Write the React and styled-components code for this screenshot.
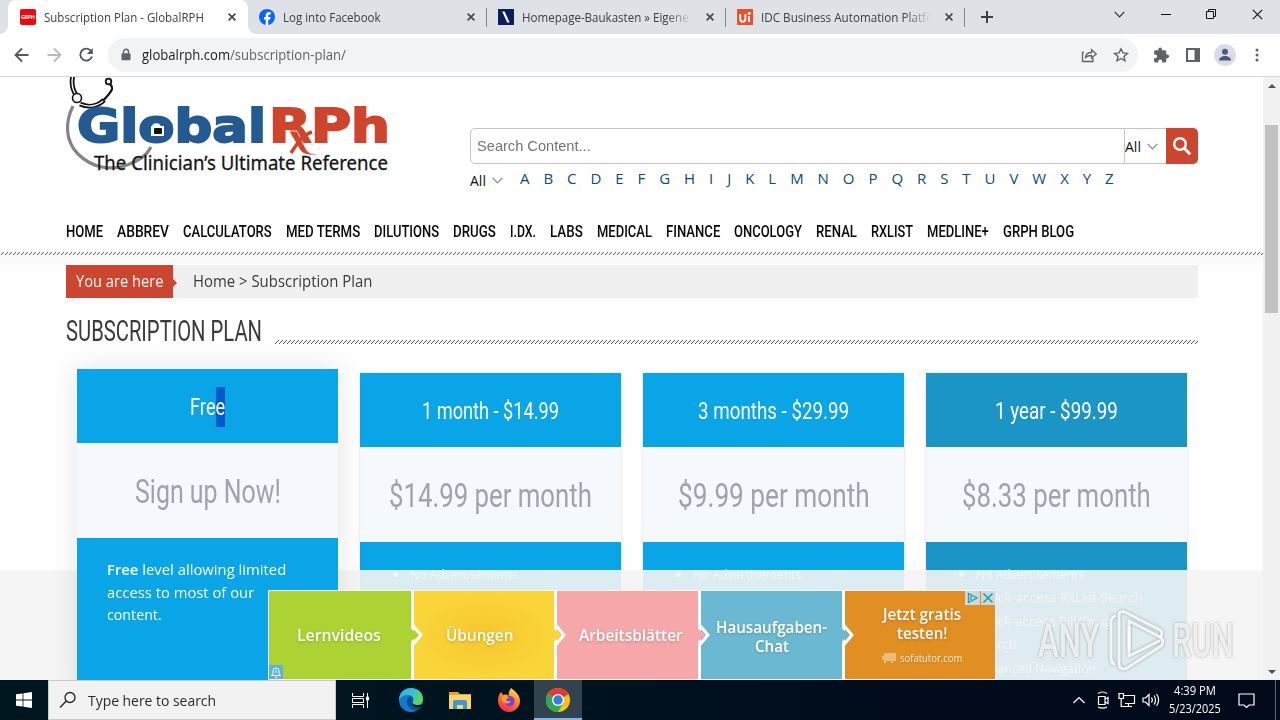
import React, { Fragment, useLayoutEffect, useRef, useState } from 'react';
import styled, { createGlobalStyle, css } from 'styled-components';

const SANS = '"Open Sans", "Noto Sans", sans-serif';
const NARROW = 'Roboto, "Open Sans", sans-serif';

const GlobalStyle = createGlobalStyle`
  * {
    box-sizing: border-box;
  }
  body {
    margin: 0;
    overflow: hidden;
    font-family: ${SANS};
  }
  ul {
    margin: 0;
    padding: 0;
    list-style: none;
  }
`;

const FitBox = styled.span`
  display: inline-block;
  flex: none;
  white-space: nowrap;
`;

const FitInner = styled.span`
  display: inline-block;
  transform-origin: 0 50%;
`;

// stretches or squeezes one line of text to a given width
function Fit({ w, children }) {
  const ref = useRef(null);
  const [scale, setScale] = useState(1);
  useLayoutEffect(() => {
    setScale(w / ref.current.offsetWidth);
  }, [w]);
  return (
    <FitBox style={{ width: w }}>
      <FitInner ref={ref} style={{ transform: `scaleX(${scale})` }}>{children}</FitInner>
    </FitBox>
  );
}

const Screen = styled.div`
  display: flex;
  flex-direction: column;
  width: 1280px;
  height: 720px;
  overflow: hidden;
  background: #fff;
`;

/* ---------- browser ---------- */

const TabStrip = styled.div`
  display: flex;
  flex: none;
  height: 34px;
  padding-left: 8px;
  background: #dee1e6;
`;

const Tab = styled.div`
  position: relative;
  display: flex;
  align-items: center;
  width: ${props => (props.$active ? 240 : 239)}px;
  height: 34px;
  padding: 0 12px 0 ${props => (props.$active ? 12 : 11)}px;
  color: #3c4043;
  font-size: 12px;
  ${props => props.$active && css`
    background: #fff;
    border-radius: 8px 8px 0 0;
    &::before, &::after {
      content: '';
      position: absolute;
      bottom: 0;
      width: 8px;
      height: 8px;
    }
    &::before {
      left: -8px;
      background: radial-gradient(circle at 0 0, transparent 7.5px, #fff 8px);
    }
    &::after {
      right: -8px;
      background: radial-gradient(circle at 100% 0, transparent 7.5px, #fff 8px);
    }
  `}
  ${props => !props.$active && css`
    &::after {
      content: '';
      position: absolute;
      right: 0;
      top: 8px;
      width: 1px;
      height: 19px;
      background: #80868b;
    }
  `}
`;

const TabTitle = styled.div`
  flex: 1;
  margin: 0 14px 0 8px;
  overflow: hidden;
  ${props => props.$fade && css`
    mask-image: linear-gradient(90deg, #000 calc(100% - 26px), transparent 100%);
  `}
`;

const WindowButtons = styled.div`
  display: flex;
  align-items: center;
  justify-content: space-between;
  width: 149px;
  height: 28px;
  margin-left: auto;
  margin-right: 17px;
`;

const NewTab = styled.div`
  display: flex;
  align-items: center;
  padding-left: 16px;
`;

const Toolbar = styled.div`
  display: flex;
  flex: none;
  align-items: center;
  height: 43px;
  padding: 0 12px 1px 12px;
  border-bottom: 1px solid #d5d7d9;
  svg {
    flex: none;
  }
`;

const NavButtons = styled.div`
  display: flex;
  gap: 12px;
  margin-right: 12px;
`;

const Omnibox = styled.div`
  display: flex;
  align-items: center;
  width: 1032px;
  height: 34px;
  padding: 0 8px 0 8px;
  border-radius: 17px;
  background: #f1f3f4;
  color: #5f6368;
  font-size: 14px;
  b {
    color: #202124;
    font-weight: 400;
  }
`;

const Url = styled.div`
  flex: 1;
  margin-left: 6px;
`;

const OmniActions = styled.div`
  display: flex;
  gap: 12px;
  margin-right: -1px;
`;

const ToolActions = styled.div`
  display: flex;
  align-items: center;
  gap: 10px;
  margin-left: 12px;
`;

const Viewport = styled.div`
  position: relative;
  display: flex;
  flex: none;
  height: 603px;
  overflow: hidden;
`;

const Page = styled.main`
  position: relative;
  width: 1263px;
  height: 603px;
  overflow: hidden;
`;

const Scrollbar = styled.div`
  display: flex;
  flex-direction: column;
  align-items: center;
  justify-content: space-between;
  width: 17px;
  padding: 7px 0 6px;
  background: #f1f1f1;
`;

const Thumb = styled.div`
  width: 13px;
  height: 188px;
  margin: 0 0 320px;
  background: #c1c1c1;
`;

/* ---------- site ---------- */

const Header = styled.header`
  display: flex;
  height: 134px;
  padding-left: 62px;
`;

const SearchArea = styled.div`
  width: 728px;
  margin: 51px 0 0 68px;
`;

const SearchBar = styled.div`
  display: flex;
  height: 36px;
`;

const SearchInput = styled.div`
  width: 655px;
  height: 36px;
  padding-left: 6px;
  border: 1px solid #c4c4c4;
  border-radius: 5px 0 0 5px;
  color: #757575;
  font-family: "Liberation Sans", Arial, sans-serif;
  font-size: 15px;
  line-height: 34px;
`;

const Select = styled.div`
  display: flex;
  align-items: center;
  gap: 6px;
  color: #111;
  font-size: 14px;
  ${props => props.$boxed && css`
    width: 41px;
    border-top: 1px solid #c4c4c4;
    border-bottom: 1px solid #c4c4c4;
  `}
  ${props => !props.$boxed && css`
    padding-top: 3px;
  `}
`;

const SearchButton = styled.div`
  display: flex;
  align-items: center;
  justify-content: center;
  width: 32px;
  border-radius: 0 5px 5px 0;
  background: #cb452f;
`;

const AlphabetRow = styled.div`
  display: flex;
  align-items: center;
  height: 30px;
`;

const Alphabet = styled.div`
  display: flex;
  justify-content: space-between;
  width: 594px;
  height: 26px;
  margin-left: 17px;
  color: #0d4a84;
  font-size: 15px;
  line-height: 24px;
`;

const Menu = styled.nav`
  display: flex;
  gap: 14px;
  height: 41px;
  padding: 8px 0 0 66px;
  color: #080808;
  font-family: ${NARROW};
  font-size: 17px;
  font-weight: 500;
  line-height: 25px;
`;

const Hatch = styled.div`
  flex: 1;
  height: ${props => props.$rows}px;
  background:
    linear-gradient(90deg, #555 1px, transparent 1px) 3px 0 / 4px 1px repeat-x,
    linear-gradient(90deg, #555 1px, transparent 1px) 2px 1px / 4px 1px repeat-x,
    linear-gradient(90deg, #555 1px, transparent 1px) 1px 2px / 4px 1px repeat-x
    ${props => props.$rows > 3 && css`,
    linear-gradient(90deg, #555 1px, transparent 1px) 0 3px / 4px 1px repeat-x`};
`;

const MenuLine = styled.div`
  display: flex;
`;

const Content = styled.section`
  width: 1263px;
  padding: 10px 65px 0 66px;
  background: linear-gradient(#f9f9f9, #fefefe 14px);
`;

const Breadcrumb = styled.div`
  display: flex;
  height: 33px;
  background: #f0f0f0;
  color: #3a3a3a;
  font-size: 15.5px;
  line-height: 33px;
`;

const YouAreHere = styled.div`
  position: relative;
  width: 107px;
  margin-right: 20px;
  padding-left: 10px;
  background: #cb452f;
  color: #fff;
  &::after {
    content: '';
    position: absolute;
    left: 107px;
    top: 14px;
    border: 4px solid transparent;
    border-left-color: #cb452f;
    border-right: 0;
  }
`;

const TitleRow = styled.div`
  display: flex;
  align-items: flex-end;
  gap: 13px;
  height: 46px;
`;

const Title = styled.h1`
  height: 38px;
  margin: 0;
  color: #3a3a3a;
  font-family: ${NARROW};
  font-size: 29px;
  font-weight: 400;
  line-height: 50px;
`;

const Plans = styled.div`
  display: flex;
  gap: 22px;
  padding: 29px 11px 0;
`;

const Plan = styled.article`
  position: relative;
  width: 261px;
  height: 330px;
  background: ${props => props.$color};
  box-shadow: 0 0 3px rgba(0, 0, 0, 0.15);
  text-align: center;
  ${props => props.$raised && css`
    z-index: 2;
    margin-top: -4px;
    box-shadow: 0 0 26px rgba(0, 0, 0, 0.1);
  `}
`;

const PlanName = styled.h2`
  height: 74px;
  margin: 0;
  color: #fff;
  font-family: ${NARROW};
  font-size: 24px;
  font-weight: 400;
  line-height: 77px;
`;

const Selected = styled.span`
  padding: 6px 0;
  background: #0158ce;
`;

const Price = styled.div`
  height: 95px;
  background: #f5f8fc;
  color: #9fa4ac;
  font-family: ${NARROW};
  font-size: 34px;
  line-height: 97px;
`;

const PlanText = styled.p`
  display: flex;
  flex-direction: column;
  margin: 0;
  padding: 20px 30px;
  color: #fff;
  font-size: 15px;
  line-height: 22.5px;
  text-align: left;
  b {
    font-weight: 600;
  }
`;

const Features = styled.ul`
  padding: 21px 0 0 50px;
  color: #fff;
  font-size: 13.5px;
  line-height: 23.4px;
  text-align: left;
  li {
    position: relative;
  }
  li::before {
    content: '';
    position: absolute;
    left: -17px;
    top: 9px;
    width: 5px;
    height: 5px;
    border-radius: 50%;
    background: #fff;
  }
`;

/* ---------- banner over the page ---------- */

const Haze = styled.div`
  position: absolute;
  left: 0;
  right: 0;
  bottom: 0;
  height: 110px;
  background: rgba(244, 244, 244, 0.9);
`;

const Banner = styled.div`
  position: absolute;
  z-index: 3;
  left: 268px;
  bottom: 0;
  display: flex;
  gap: 3px;
  width: 727px;
  height: 90px;
  border: 1px solid #f5f6ee;
  border-right: 0;
  background: #fff;
`;

const Panel = styled.div`
  position: relative;
  display: flex;
  flex-direction: column;
  align-items: center;
  justify-content: center;
  width: ${props => props.$w}px;
  padding: ${props => props.$pad || 0};
  background: ${props => props.$bg};
  color: #fff;
  font-size: 16px;
  font-weight: 600;
  line-height: 19px;
  text-shadow: 0 1px 3px rgba(0, 0, 0, 0.2);
  small {
    display: flex;
    align-items: center;
    gap: 3px;
    margin-top: 5px;
    font-size: 11px;
    font-weight: 400;
    opacity: 0.85;
  }
`;

const Chevron = styled.svg`
  position: absolute;
  z-index: 1;
  right: -13px;
  top: 31px;
`;

const AdChoices = styled.div`
  position: absolute;
  right: 0;
  top: 0;
  display: flex;
  gap: 1px;
  svg {
    background: #cfd8d8;
  }
`;

const AdBell = styled.svg`
  position: absolute;
  left: 0;
  bottom: 0;
`;

const Watermark = styled.div`
  position: absolute;
  z-index: 4;
  left: 1038px;
  top: 532px;
  display: flex;
  align-items: center;
  color: rgba(255, 255, 255, 0.8);
  font-family: ${NARROW};
  font-size: 48px;
  font-weight: 500;
  line-height: 64px;
  text-shadow: 0 0 3px rgba(90, 90, 90, 0.55);
  svg {
    margin: 0 5px 0 7px;
    filter: drop-shadow(0 0 1.5px rgba(90, 90, 90, 0.6));
  }
`;

/* ---------- taskbar ---------- */

const Taskbar = styled.footer`
  display: flex;
  flex: none;
  height: 40px;
  background: linear-gradient(90deg, #00161f 0%, #00141f 40%, #010b1c 70%, #020a1b 100%);
  color: #fff;
`;

const Start = styled.div`
  display: flex;
  align-items: center;
  justify-content: center;
  width: 48px;
`;

const TaskSearch = styled.div`
  display: flex;
  align-items: center;
  gap: 11px;
  width: 288px;
  padding-left: 10px;
  border: 1px solid #c9c9c9;
  background: #f2f2f2;
  color: #2b2b2b;
  font-size: 15px;
`;

const TaskButton = styled.div`
  display: flex;
  align-items: center;
  justify-content: center;
  width: ${props => props.$w || 49}px;
  ${props => props.$active && css`
    background: #33434e;
    border-bottom: 2px solid #76b9ed;
    padding-top: 2px;
  `}
`;

const Tray = styled.div`
  display: flex;
  align-items: center;
  gap: 6px;
  margin-left: auto;
`;

const Clock = styled.div`
  display: flex;
  flex-direction: column;
  align-items: center;
  width: 56px;
  margin-left: 1px;
  font-size: 12px;
  line-height: 18px;
`;

const ShowDesktop = styled.div`
  width: 5px;
  height: 40px;
  margin-left: 6px;
  border-left: 1px solid #5a626c;
`;

/* ---------- drawings ---------- */

const Cross = ({ size = 8, color = '#45494d', sw = 1.7 }) => (
  <svg width={size} height={size} viewBox="0 0 8 8" fill="none" stroke={color} strokeWidth={sw}>
    <path d="M.6.6l6.8 6.8M7.4.6L.6 7.4" />
  </svg>
);

const GrphIcon = () => (
  <svg width="16" height="16">
    <rect width="16" height="16" rx="2" fill="#f5060a" />
    <text x="1" y="10" fontSize="5.5" fontWeight="700" fill="#fff" textLength="14" fontFamily="Open Sans">GRPH</text>
  </svg>
);

const FacebookIcon = () => (
  <svg width="16" height="16" viewBox="0 0 16 16">
    <circle cx="8" cy="8" r="8" fill="#0866ff" />
    <path d="M6.7 15.8v-5.3H5V8h1.7V6.9c0-2.6 1.2-3.8 3.7-3.8.5 0 1 .1 1.3.2v2.2h-.9c-1.2 0-1.6.5-1.6 1.6V8h2.3l-.4 2.5H9.2v5.4c-.8.1-1.7.1-2.5-.1z" fill="#fff" />
  </svg>
);

const SlashIcon = () => (
  <svg width="16" height="16">
    <rect width="16" height="16" fill="#0b1f5e" />
    <path d="M4.2 2.5h2.4l5 11H9.2z" fill="#fff" />
  </svg>
);

const UiIcon = () => (
  <svg width="16" height="16">
    <rect width="16" height="16" fill="#f04e23" />
    <path d="M3.2 5v5c0 3.500 5.200 3.500 5.200 0V5M12 7.300V13" fill="none" stroke="#fff" strokeWidth="2" />
    <circle cx="12.2" cy="4.2" r="1.5" fill="#fff" />
  </svg>
);

const Down = ({ w = 11, color = '#888' }) => (
  <svg width={w} height="7" viewBox="0 0 11 7" fill="none" stroke={color} strokeWidth="1.2">
    <path d="M.7.8l4.8 5 4.8-5" />
  </svg>
);

const Logo = () => (
  <svg width="340" height="110" viewBox="62 77 340 110">
    <path d="M73 106c-8 16-8 35 5 48 14 14 33 17 49 11 12-4 20-10 24-18" fill="none" stroke="#858585" strokeWidth="3.2" />
    <g fill="none" stroke="#111">
      <path d="M73 75c-2 8-1 14 3 20M80 104c9 4 18 2 24-4" strokeWidth="4.8" />
      <path d="M73 75c-2 8-1 14 3 20M80 104c9 4 18 2 24-4" stroke="#fff" strokeWidth="1.3" />
      <path d="M103 101c3-4 8-8 9-12 .5-3-1-4-2-5" strokeWidth="2.2" />
      <circle cx="77" cy="98" r="4.5" fill="#fff" strokeWidth="1.6" />
      <circle cx="108.500" cy="81.500" r="2.8" fill="#fff" strokeWidth="1.8" />
    </g>
    <g fontFamily="DejaVu Sans" fontWeight="700" fontSize="46" strokeWidth="2">
      <text x="77" y="141.500" fill="#235a94" stroke="#235a94" textLength="189" lengthAdjust="spacingAndGlyphs">Global</text>
      <text x="269" y="141.500" fill="#cf452b" stroke="#cf452b" textLength="121" lengthAdjust="spacingAndGlyphs">RPh</text>
    </g>
    <rect x="151" y="126" width="13" height="10" fill="#fff" />
    <rect x="154" y="128" width="8" height="6" rx="1" fill="#111" />
    <path d="M289 131h8l9 18c2 4 5 5 15 5-10 2-18 1-21-4z" fill="#cf452b" stroke="#fff" strokeWidth=".8" />
    <path d="M312 132c-10 3-15 12-21 21" fill="none" stroke="#cf452b" strokeWidth="3.5" />
    <text x="94" y="169.500" fontFamily="Noto Sans" fontSize="19.5" fill="#151515" stroke="#151515" strokeWidth=".3" textLength="294" lengthAdjust="spacingAndGlyphs">The Clinician’s Ultimate Reference</text>
  </svg>
);

const BackIcon = ({ color = '#55595e', flip }) => (
  <svg width="20" height="20" viewBox="0 0 20 20" fill="none" stroke={color} strokeWidth="1.8">
    <path d={flip ? 'M3.500 10h13M10 3.500l6.500 6.500L10 16.500' : 'M16.500 10h-13M10 3.500L3.500 10l6.500 6.500'} />
  </svg>
);

const ReloadIcon = () => (
  <svg width="20" height="20" viewBox="0 0 20 20" fill="none">
    <path d="M15.300 6.300A6 6 0 1 0 16 11.500" stroke="#55595e" strokeWidth="1.9" />
    <path d="M16.800 3v6h-6z" fill="#55595e" />
  </svg>
);

const LockIcon = () => (
  <svg width="20" height="20" viewBox="0 0 20 20">
    <rect x="5.5" y="8.3" width="9" height="7" rx="1" fill="#5f6368" />
    <path d="M7.500 8.500V6.700a2.500 2.500 0 0 1 5 0v1.800" fill="none" stroke="#5f6368" strokeWidth="1.4" />
  </svg>
);

const ShareIcon = () => (
  <svg width="20" height="20" viewBox="0 0 20 20" fill="none" stroke="#5f6368" strokeWidth="1.3">
    <path d="M5 7.500H3.500v9H14V13" />
    <path d="M6.500 12.500c.3-3.700 2.500-5 6-5V4.800L17.200 9l-4.700 4v-2.500c-2.700 0-4.500.5-6 2z" />
  </svg>
);

const StarIcon = () => (
  <svg width="20" height="20" viewBox="0 0 20 20" fill="none" stroke="#5f6368" strokeWidth="1.4">
    <path d="M10 3.800l1.900 4.100 4.500.5-3.400 3 1 4.500-4-2.400-4 2.400 1-4.500-3.400-3 4.500-.5z" />
  </svg>
);

const PuzzleIcon = () => (
  <svg width="22" height="20" viewBox="0 0 24 24" fill="#5f6368">
    <path d="M20.500 11H19V7c0-1.100-.9-2-2-2h-4V3.500a2.500 2.500 0 0 0-5 0V5H4c-1.100 0-2 .9-2 2v3.800h1.500a2.700 2.700 0 0 1 0 5.400H2V20c0 1.100.9 2 2 2h3.800v-1.500a2.700 2.700 0 0 1 5.400 0V22H17c1.100 0 2-.9 2-2v-4h1.500a2.500 2.500 0 0 0 0-5z" transform="translate(2 2) scale(.86)" />
  </svg>
);

const PanelIcon = () => (
  <svg width="22" height="20" viewBox="0 0 22 20">
    <path d="M4 3h14v14H4zM6 5v10h6.500V5z" fill="#5f6368" fillRule="evenodd" />
  </svg>
);

const Avatar = () => (
  <svg width="22" height="22" viewBox="0 0 22 22">
    <circle cx="11" cy="11" r="11" fill="#dadce8" />
    <circle cx="11" cy="7.8" r="3" fill="#50587a" />
    <path d="M5 16.500c0-6 12-6 12 0z" fill="#50587a" />
  </svg>
);

const DotsIcon = () => (
  <svg width="22" height="20" viewBox="0 0 22 20" fill="#5f6368">
    <circle cx="11" cy="5" r="1.5" />
    <circle cx="11" cy="10" r="1.5" />
    <circle cx="11" cy="15" r="1.5" />
  </svg>
);

const ArrowRight = ({ color }) => (
  <Chevron width="14" height="26" viewBox="0 0 14 26">
    <path d="M0 6l9.500 7L0 20z" fill={color} />
    <path d="M3 3.500l8 9.500-8 9.500" fill="none" stroke="#fff" strokeWidth="3" />
  </Chevron>
);

const PlayMark = () => (
  <svg width="60" height="64" viewBox="0 0 60 64" fill="none" stroke="rgba(255,255,255,.85)" strokeWidth="3" strokeLinecap="round" strokeLinejoin="round">
    <path d="M8 7q-4 2-4 6v36q0 4 3 6" />
    <path d="M22 40V12l31 16q4-4 0-7L18 3q-6-2-6 4v46" />
    <path d="M22 19v28l30-15" />
    <path d="M12 55q1 7 8 4l34-22q4-5-1-9" />
  </svg>
);

const EdgeIcon = () => (
  <svg width="26" height="26" viewBox="0 0 26 26">
    <defs>
      <linearGradient id="edgeTop" x1="0" y1="0" x2="1" y2=".5">
        <stop offset="0" stopColor="#2bb3e8" />
        <stop offset=".6" stopColor="#35c3c9" />
        <stop offset="1" stopColor="#5fd854" />
      </linearGradient>
    </defs>
    <circle cx="13" cy="13" r="12" fill="#1279cf" />
    <path d="M1 13C1 5 7 1 13 1c7 0 12 5 12 11 0 4-3 6-6 6-4 0-5-2-4-3 1-2 1-6-4-7-4 0-8 1-10 5z" fill="url(#edgeTop)" />
    <path d="M12 9c-5 3-4 12 4 14 3 .6 6-1 7.500-3-6 3-11 0-9-4.500C15.500 13 15 10 12 9z" fill="#0c4c93" />
    <path d="M14.500 15.500c-1 4.500 4 6.500 8.500 4.500l2-3.500c-2 1.500-4 1.700-6 1.500-3 0-4.500-1.300-4.500-2.500z" fill="#00161f" />
  </svg>
);

const FolderIcon = () => (
  <svg width="24" height="22" viewBox="0 0 24 22">
    <path d="M1 3h9l2 2h11v3H1z" fill="#e2a22e" />
    <path d="M1 6h22v14H1z" fill="#fcd667" />
    <path d="M5 20v-7q0-2 2-2h10q2 0 2 2v7h-4v-4H9v4z" fill="#3f97d8" />
  </svg>
);

const FirefoxIcon = () => (
  <svg width="26" height="26" viewBox="0 0 26 26">
    <defs>
      <linearGradient id="fox" x1=".8" y1="0" x2=".3" y2="1">
        <stop offset="0" stopColor="#ffe14a" />
        <stop offset=".45" stopColor="#ff8a1c" />
        <stop offset="1" stopColor="#f5225c" />
      </linearGradient>
    </defs>
    <path d="M15 1c4 3 9 7 9 13 0 6-5 11-11 11S2 20 2 14c0-4 1-7 3-9l2 3c3-1 5 0 6 1-1-4 1-6 2-8z" fill="url(#fox)" />
    <circle cx="13.5" cy="14" r="5.2" fill="#7b3fd6" />
    <path d="M6 9c3-1 6 0 7 2-2 0-3 1-3 2 1 2 4 1 5 1-1 3-7 4-9-1z" fill="#ffa227" />
  </svg>
);

const ChromeIcon = () => (
  <svg width="24" height="24" viewBox="0 0 24 24">
    <circle cx="12" cy="12" r="12" fill="#fbc116" />
    <path d="M12 12L1.600 6A12 12 0 0 1 22.400 6z" fill="#e33b2e" />
    <path d="M12 6h10.400L12 12z" fill="#e33b2e" />
    <path d="M1.600 6A12 12 0 0 0 12 24l5.200-9z" fill="#2da94f" />
    <circle cx="12" cy="12" r="6" fill="#fff" />
    <circle cx="12" cy="12" r="4.7" fill="#2f7de9" />
  </svg>
);

const TrayIcon = ({ w = 18, children }) => (
  <svg width={w} height="18" viewBox={`0 0 ${w} 18`} fill="none" stroke="#fff" strokeWidth="1.2">
    {children}
  </svg>
);

/* ---------- data ---------- */

const TABS = [
  { icon: <GrphIcon />, title: 'Subscription Plan - GlobalRPH', w: 160, active: true },
  { icon: <FacebookIcon />, title: 'Log into Facebook', w: 98 },
  { icon: <SlashIcon />, title: 'Homepage-Baukasten » Eigene W', w: 180, fade: true },
  { icon: <UiIcon />, title: 'IDC Business Automation Platfor', w: 177, fade: true },
];

const MENU = [
  ['HOME', 37], ['ABBREV', 52], ['CALCULATORS', 89], ['MED TERMS', 74], ['DILUTIONS', 65],
  ['DRUGS', 43], ['I.DX.', 26], ['LABS', 33], ['MEDICAL', 55], ['FINANCE', 54],
  ['ONCOLOGY', 68], ['RENAL', 41], ['RXLIST', 42], ['MEDLINE+', 62], ['GRPH BLOG', 71],
];

const BLUE = '#09a5e6';

const PAID = [
  { name: '1 month - $14.99', nameW: 137, price: '$14.99 per month', priceW: 203, color: BLUE },
  { name: '3 months - $29.99', nameW: 151, price: '$9.99 per month', priceW: 192, color: BLUE },
  { name: '1 year - $99.99', nameW: 123, price: '$8.33 per month', priceW: 189, color: '#1b95c6' },
];

const FEATURES = [
  ['No Advertisements', 108],
  ['Quick-access RxList Search', 167],
  ['Quick-access Pill/Drug', 136],
  ['Search', 41],
  ['Enhanced Navigation', 120],
];

function Browser() {
  return (
    <Fragment>
      <TabStrip>
        {TABS.map(t => (
          <Tab key={t.title} $active={t.active}>
            {t.icon}
            <TabTitle $fade={t.fade}><Fit w={t.w}>{t.title}</Fit></TabTitle>
            <Cross />
          </Tab>
        ))}
        <NewTab>
          <svg width="12" height="12" stroke="#3c4043" strokeWidth="2"><path d="M6 0v12M0 6h12" /></svg>
        </NewTab>
        <WindowButtons>
          <Down color="#333" />
          <svg width="10" height="10" stroke="#111"><path d="M0 5.500h10" /></svg>
          <svg width="10" height="10" fill="none" stroke="#111"><path d="M.5 2.500h7v7h-7zM2.500 2.500v-2h7v7h-2" /></svg>
          <Cross size={11} color="#111" sw={0.8} />
        </WindowButtons>
      </TabStrip>
      <Toolbar>
        <NavButtons>
          <BackIcon />
          <BackIcon flip color="#b9bbbe" />
          <ReloadIcon />
        </NavButtons>
        <Omnibox>
          <LockIcon />
          <Url><Fit w={204}><b>globalrph.com</b>/subscription-plan/</Fit></Url>
          <OmniActions>
            <ShareIcon />
            <StarIcon />
          </OmniActions>
        </Omnibox>
        <ToolActions>
          <PuzzleIcon />
          <PanelIcon />
          <Avatar />
          <DotsIcon />
        </ToolActions>
      </Toolbar>
    </Fragment>
  );
}

function SiteHeader() {
  return (
    <Fragment>
      <Header>
        <Logo />
        <SearchArea>
          <SearchBar>
            <SearchInput><Fit w={114}>Search Content...</Fit></SearchInput>
            <Select $boxed><Fit w={16}>All</Fit><Down /></Select>
            <SearchButton>
              <svg width="20" height="20" fill="none" stroke="#fff" strokeWidth="2.5">
                <circle cx="8" cy="8" r="5.8" />
                <path d="M12.200 12.200l6 6" strokeWidth="3" />
              </svg>
            </SearchButton>
          </SearchBar>
          <AlphabetRow>
            <Select><Fit w={16}>All</Fit><Down /></Select>
            <Alphabet>
              {'ABCDEFGHIJKLMNOPQRSTUVWXYZ'.split('').map(l => <span key={l}>{l}</span>)}
            </Alphabet>
          </AlphabetRow>
        </SearchArea>
      </Header>
      <Menu>
        {MENU.map(([label, w]) => <Fit key={label} w={w}>{label}</Fit>)}
      </Menu>
      <MenuLine><Hatch $rows={3} /></MenuLine>
    </Fragment>
  );
}

function PlanList() {
  return (
    <Plans>
      <Plan $color={BLUE} $raised>
        <PlanName><Fit w={35}>Fre<Selected>e</Selected></Fit></PlanName>
        <Price><Fit w={146}>Sign up Now!</Fit></Price>
        <PlanText>
          <Fit w={179}><b>Free</b> level allowing limited</Fit>
          <Fit w={147}>access to most of our</Fit>
          <Fit w={55}>content.</Fit>
        </PlanText>
      </Plan>
      {PAID.map((p, i) => (
        <Plan key={p.name} $color={p.color}>
          <PlanName><Fit w={p.nameW}>{p.name}</Fit></PlanName>
          <Price><Fit w={p.priceW}>{p.price}</Fit></Price>
          <Features>
            {FEATURES.slice(0, i === 2 ? 5 : 1).map(([text, w]) => (
              <li key={text}><Fit w={w}>{text}</Fit></li>
            ))}
          </Features>
        </Plan>
      ))}
    </Plans>
  );
}

function AdBanner() {
  return (
    <Banner>
      <Panel $w={142} $bg="#acd333" $pad="0 2px 0 0"><Fit w={84}>Lernvideos</Fit><ArrowRight color="#acd333" /></Panel>
      <Panel $w={140} $bg="radial-gradient(#f6c62e, #fad53a 70%)" $pad="0 9px 0 0"><Fit w={67}>Übungen</Fit><ArrowRight color="#fad53a" /></Panel>
      <Panel $w={141} $bg="#f5a7a9" $pad="0 0 0 6px"><Fit w={104}>Arbeitsblätter</Fit><ArrowRight color="#f5a7a9" /></Panel>
      <Panel $w={141} $bg="#6bb8d2" $pad="4px 0 0"><Fit w={111}>Hausaufgaben-</Fit><Fit w={34}>Chat</Fit><ArrowRight color="#6bb8d2" /></Panel>
      <Panel $w={150} $bg="#e18e22" $pad="2px 0 0 3px">
        <Fit w={78}>Jetzt gratis</Fit>
        <Fit w={50}>testen!</Fit>
        <small>
          <svg width="15" height="11" fill="#f0c58c"><path d="M2 1h12v8h-3v2H9V9H4v2H2V8L0 7V4l2-1z" /></svg>
          <Fit w={62}>sofatutor.com</Fit>
        </small>
      </Panel>
      <AdChoices>
        <svg width="15" height="14" fill="none" stroke="#17a0b8" strokeWidth="1.3"><path d="M3.500 2.500v9l8.500-4.500zM6 5v4" /></svg>
        <svg width="14" height="14" fill="none" stroke="#17a0b8" strokeWidth="1.6"><path d="M2.500 2.500l9 9M11.500 2.500l-9 9" /></svg>
      </AdChoices>
      <AdBell width="14" height="14">
        <rect width="14" height="14" fill="#5cb1de" />
        <path d="M2.500 10.500h9L10 8.500V6a3 3 0 0 0-6 0v2.500zM6 12.500h2.500M7 5v3" fill="none" stroke="#fff" />
      </AdBell>
    </Banner>
  );
}

function WindowsTaskbar() {
  return (
    <Taskbar>
      <Start>
        <svg width="16" height="16" fill="#fff"><path d="M0 2.300l6.600-.9v6.200H0zM7.400 1.300L16 0v7.600H7.400zM0 8.400h6.600v6.200L0 13.700zM7.400 8.400H16V16l-8.600-1.300z" /></svg>
      </Start>
      <TaskSearch>
        <svg width="18" height="18" fill="none" stroke="#222" strokeWidth="1.3"><circle cx="11" cy="6.5" r="5" /><path d="M7.300 10L1 16.500" /></svg>
        <Fit w={128}>Type here to search</Fit>
      </TaskSearch>
      <TaskButton $w={49}>
        <svg width="17" height="17" fill="none" stroke="#fff"><path d="M.5 1v3.500h11V1M.5 16v-3.500h11V16M.5 6.500h11v4H.5zM15.500 1v15" /><path d="M14.500 5h2v3h-2z" fill="#fff" /></svg>
      </TaskButton>
      <TaskButton $w={51}><EdgeIcon /></TaskButton>
      <TaskButton $w={47}><FolderIcon /></TaskButton>
      <TaskButton $w={51}><FirefoxIcon /></TaskButton>
      <TaskButton $w={48} $active><ChromeIcon /></TaskButton>
      <Tray>
        <TrayIcon><path d="M3.500 12L9 6.500l5.500 5.500" /></TrayIcon>
        <TrayIcon><path d="M4.500 5.500h6.500v8H4.500zM11 8l3-1.500v6L11 11M4 2.500c3-2 6-2 9 0M4 16c3 1.500 6 1.500 9 0" /></TrayIcon>
        <TrayIcon><path d="M5.500 4.500h11v8H7M10.500 12.500v3M7 15.500h7M1 2.500h4.500v5H1zM3.200 7.500V15.500H7" /></TrayIcon>
        <TrayIcon><path d="M1 7h2.500L7 3.500v11L3.500 11H1zM9.500 6.500c1 1.500 1 3.500 0 5M12 4.500c2 2.500 2 6.500 0 9M14.500 3c2.800 3.500 2.800 8.500 0 12" /></TrayIcon>
        <Clock>
          <Fit w={42}>4:39 PM</Fit>
          <Fit w={52}>5/23/2025</Fit>
        </Clock>
        <TrayIcon w={34}><path d="M10 3h15v11h-5l-2.500 2.500L15 14h-5z" /></TrayIcon>
        <ShowDesktop />
      </Tray>
    </Taskbar>
  );
}

function App() {
  return (
    <Screen>
      <GlobalStyle />
      <Browser />
      <Viewport>
        <Page>
          <SiteHeader />
          <Content>
            <Breadcrumb>
              <YouAreHere><Fit w={87}>You are here</Fit></YouAreHere>
              <Fit w={179}>Home &gt; Subscription Plan</Fit>
            </Breadcrumb>
            <TitleRow>
              <Title><Fit w={196}>SUBSCRIPTION PLAN</Fit></Title>
              <Hatch $rows={4} />
            </TitleRow>
            <PlanList />
          </Content>
          <Haze />
          <AdBanner />
          <Watermark>
            <Fit w={62}>ANY</Fit>
            <PlayMark />
            <Fit w={62}>RUN</Fit>
          </Watermark>
        </Page>
        <Scrollbar>
          <svg width="8" height="4" fill="#505050"><path d="M0 4l4-4 4 4z" /></svg>
          <Thumb />
          <svg width="8" height="4" fill="#505050"><path d="M0 0h8L4 4z" /></svg>
        </Scrollbar>
      </Viewport>
      <WindowsTaskbar />
    </Screen>
  );
}

export default App;
